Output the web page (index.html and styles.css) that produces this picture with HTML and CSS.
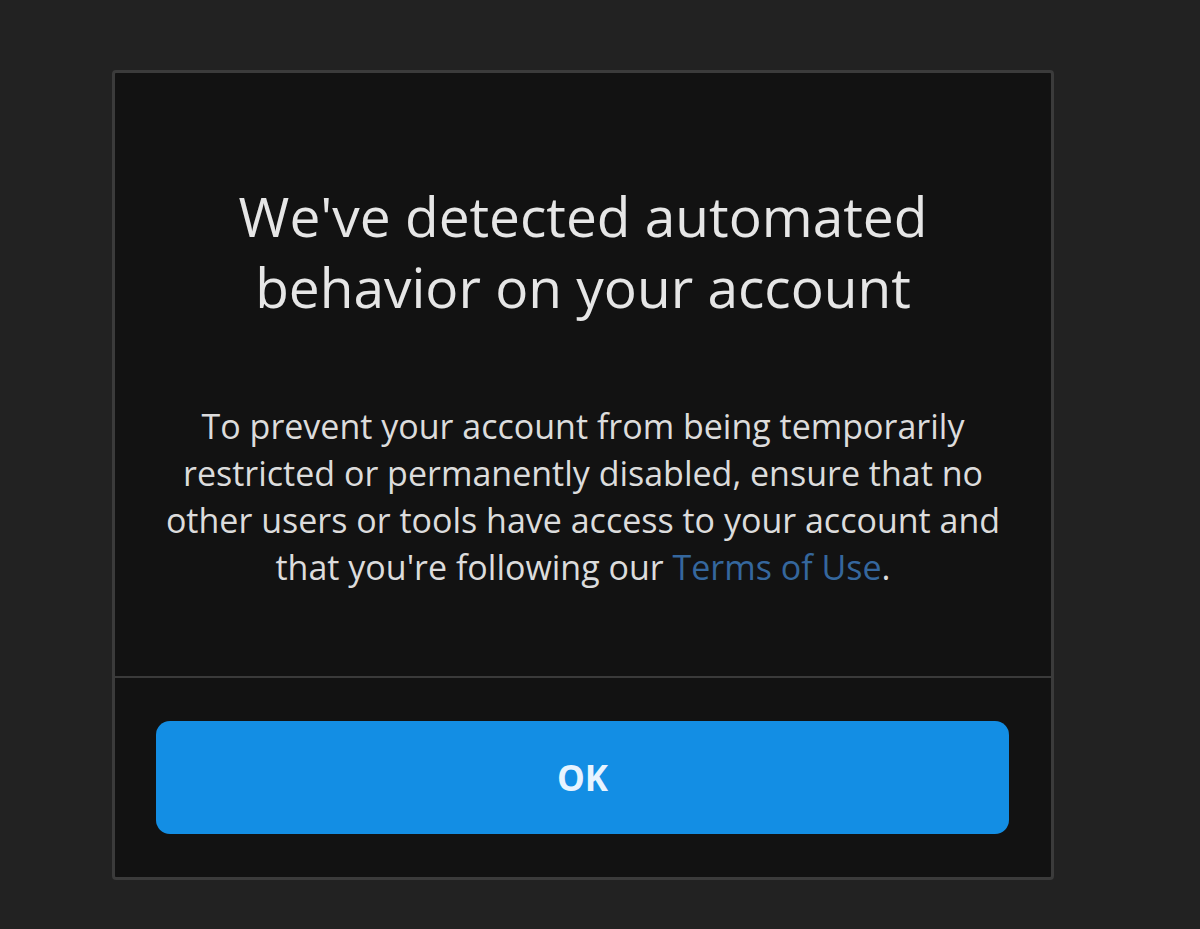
FILE: index.html
```html
<!DOCTYPE html>
<html lang="en">
<head>
<meta charset="utf-8">
<title>Automated behavior</title>
<link rel="stylesheet" href="styles.css">
</head>
<body>
<div class="dialog">
  <div class="content">
    <h1 class="title">We've detected automated<br>behavior on your account</h1>
    <p class="message">To prevent your account from being temporarily<br>restricted or permanently disabled, ensure that no<br>other users or tools have access to your account and<br>that you're following our <a class="link" href="#">Terms of Use</a>.</p>
  </div>
  <div class="actions">
    <button class="ok-btn" type="button">OK</button>
  </div>
</div>
</body>
</html>
```
FILE: styles.css
```css
html, body {
  margin: 0;
  padding: 0;
}
body {
  background: #222222;
  height: 929px;
  overflow: hidden;
  padding: 70px 0 0 112px;
  box-sizing: border-box;
  font-family: "Open Sans", "Noto Sans", sans-serif;
}
.dialog {
  width: 942px;
  box-sizing: border-box;
  border: 3px solid #3b3b3b;
  border-radius: 4px;
  background: #121212;
  display: flex;
  flex-direction: column;
}
.content {
  height: 605px;
  box-sizing: border-box;
  padding-top: 107px;
  text-align: center;
  border-bottom: 2px solid #3a3a3a;
}
.title {
  margin: 0;
  font-size: 55px;
  line-height: 71px;
  font-weight: 400;
  color: #e6e6e6;
}
.message {
  margin: 81px 0 0;
  font-size: 34px;
  line-height: 47px;
  font-weight: 400;
  color: #dcdcdc;
}
.link {
  color: #35679d;
  text-decoration: none;
}
.actions {
  padding: 43px 42px 43px 41px;
}
.ok-btn {
  display: block;
  width: 100%;
  height: 113px;
  border: none;
  border-radius: 14px;
  background: #138ee4;
  color: #e8f4ff;
  font-family: "Open Sans", "Noto Sans", sans-serif;
  font-size: 35px;
  font-weight: 700;
  cursor: pointer;
}
```
